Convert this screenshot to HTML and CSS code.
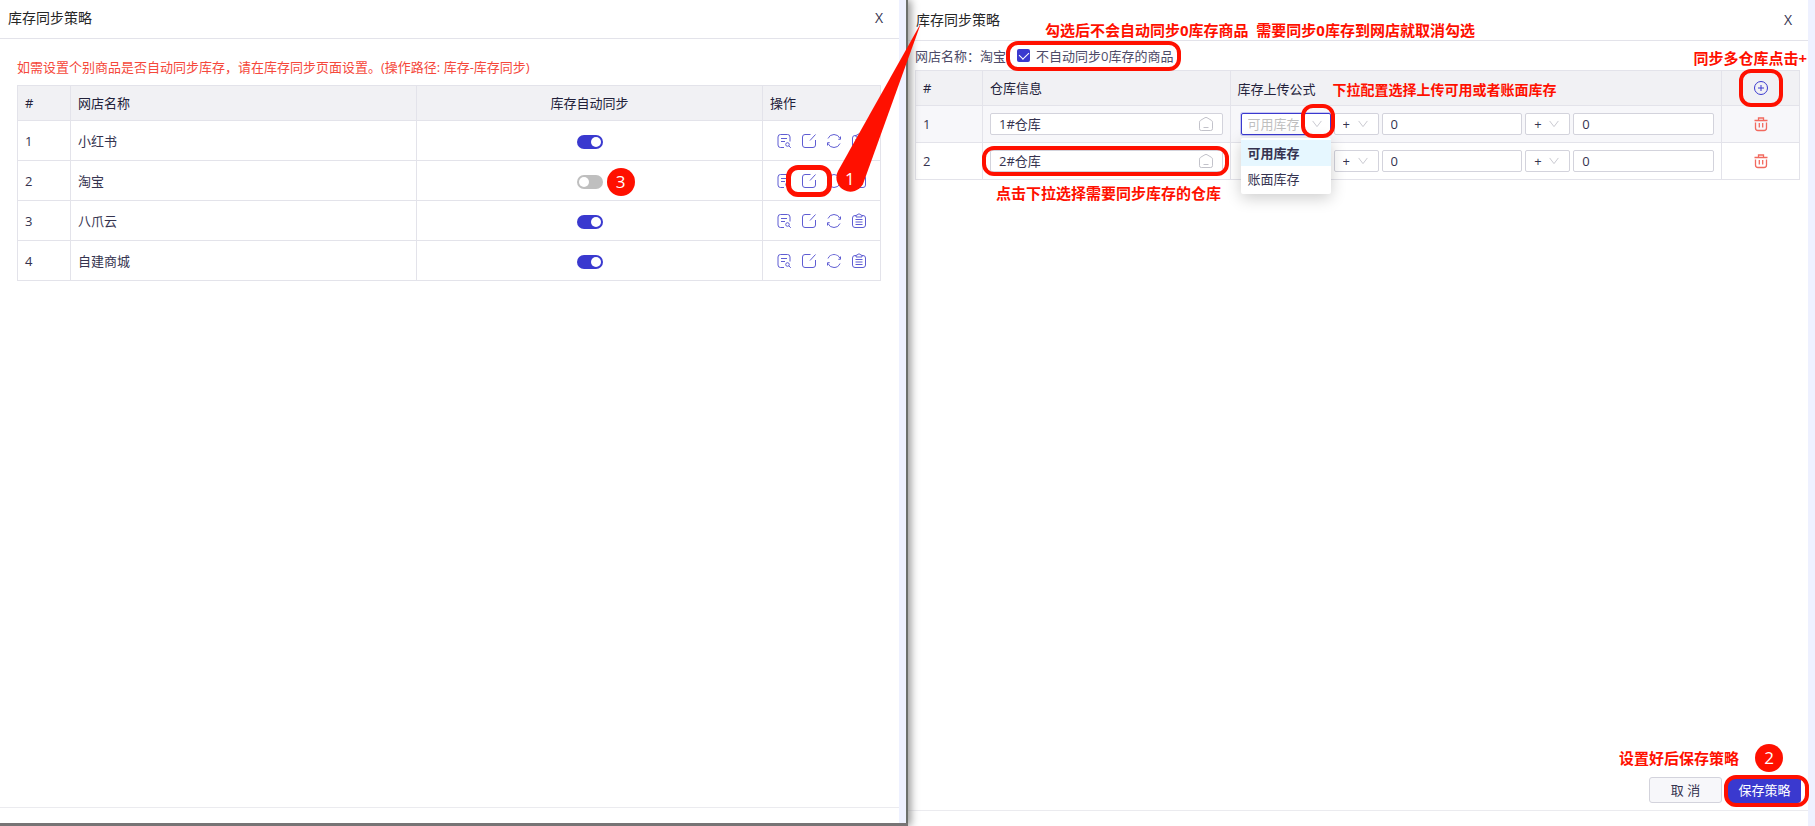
FILE: index.html
```html
<!DOCTYPE html>
<html lang="zh-CN">
<head>
    <meta charset="UTF-8">
    <meta name="viewport" content="width=device-width, initial-scale=1.0">
    <title>库存同步策略</title>
    <link rel="stylesheet" href="styles.css">
</head>
<body>
    <!-- Icon sprite -->
    <svg class="sprite" aria-hidden="true">
        <symbol id="icon-log" viewBox="0 0 16 16">
            <path d="M8 14.500H4.500A2.500 2.500 0 0 1 2 12V4A2.500 2.500 0 0 1 4.500 1.500h7A2.500 2.500 0 0 1 14 4v4.500M5 5.500h6M5 8.500h4"/>
            <circle cx="11.500" cy="11.500" r="1.800"/>
            <path d="M12.800 12.800l2 2"/>
        </symbol>
        <symbol id="icon-edit" viewBox="0 0 16 16">
            <path d="M9.500 1.500H4A2.500 2.500 0 0 0 1.500 4v8A2.500 2.500 0 0 0 4 14.500h8a2.500 2.500 0 0 0 2.500-2.500V7M9 7.500l5.500-6"/>
        </symbol>
        <symbol id="icon-sync" viewBox="0 0 16 16">
            <path d="M2 5.500A6.500 6.500 0 0 1 14 5.500M14 10.500A6.500 6.500 0 0 1 2 10.500M14.500 3.500V6.300h-2.200M1.500 12.500V9.700h2.200"/>
        </symbol>
        <symbol id="icon-list" viewBox="0 0 16 16">
            <path d="M5 2.500H4A2.500 2.500 0 0 0 1.500 5v7A2.500 2.500 0 0 0 4 14.500h8a2.500 2.500 0 0 0 2.500-2.500V5A2.500 2.500 0 0 0 12 2.500h-1M5 4V2.500L8 .8l3 1.700V4zM4.500 6.500h7M4.500 9h7M4.500 11.500h7"/>
        </symbol>
        <symbol id="icon-home" viewBox="0 0 16 16">
            <path d="M1.500 6.200Q1.500 5 2.600 4.300L7 1.700q1-.5 2 0l4.400 2.600Q14.500 5 14.500 6.200v6.500q0 1.800-1.800 1.800H3.300q-1.800 0-1.800-1.800zM5.500 11.500h5"/>
        </symbol>
        <symbol id="icon-down" viewBox="0 0 16 16">
            <path d="M3 4.500l5 6.500 5-6.500"/>
        </symbol>
        <symbol id="icon-plus" viewBox="0 0 16 16">
            <circle cx="8" cy="8" r="6.500"/>
            <path d="M8 5v6M5 8h6"/>
        </symbol>
        <symbol id="icon-trash" viewBox="0 0 16 16">
            <path d="M1.500 4.500h13M5.500 4V2h5v2M2.500 6.500V12q0 2.500 2.500 2.500h6q2.500 0 2.500-2.500V6.500M6.300 7v4.500M9.700 7v4.500"/>
        </symbol>
    </svg>

    <main class="layout">
        <section class="window shops">
            <header class="window-header">
                <h1>库存同步策略</h1>
                <button type="button" class="close" aria-label="关闭">X</button>
            </header>
            <div class="window-body">
                <p class="tip">如需设置个别商品是否自动同步库存，请在库存同步页面设置。(操作路径: 库存-库存同步)</p>
                <table class="grid shop-table">
                    <thead>
                        <tr>
                            <th class="col-no">#</th>
                            <th>网店名称</th>
                            <th class="col-sync">库存自动同步</th>
                            <th class="col-ops">操作</th>
                        </tr>
                    </thead>
                    <tbody>
                        <tr>
                            <td>1</td>
                            <td>小红书</td>
                            <td class="col-sync"><input type="checkbox" class="switch" aria-label="小红书自动同步" checked></td>
                            <td>
                                <div class="ops">
                                    <button type="button" aria-label="日志"><svg><use href="#icon-log"/></svg></button>
                                    <button type="button" aria-label="编辑"><svg><use href="#icon-edit"/></svg></button>
                                    <button type="button" aria-label="同步"><svg><use href="#icon-sync"/></svg></button>
                                    <button type="button" aria-label="清单"><svg><use href="#icon-list"/></svg></button>
                                </div>
                            </td>
                        </tr>
                        <tr>
                            <td>2</td>
                            <td>淘宝</td>
                            <td class="col-sync">
                                <span class="anchor">
                                    <input type="checkbox" class="switch" aria-label="淘宝自动同步">
                                    <span class="badge badge-toggle">3</span>
                                </span>
                            </td>
                            <td>
                                <div class="ops">
                                    <button type="button" aria-label="日志"><svg><use href="#icon-log"/></svg></button>
                                    <button type="button" class="anchor" aria-label="编辑">
                                        <svg><use href="#icon-edit"/></svg>
                                        <span class="ring ring-edit"></span>
                                    </button>
                                    <button type="button" aria-label="同步"><svg><use href="#icon-sync"/></svg></button>
                                    <button type="button" aria-label="清单"><svg><use href="#icon-list"/></svg></button>
                                    <span class="callout">
                                        <svg viewBox="0 0 86 170"><path d="M85 0L27 161A14 14 0 1 1 2 148z"/></svg>
                                        <b>1</b>
                                    </span>
                                </div>
                            </td>
                        </tr>
                        <tr>
                            <td>3</td>
                            <td>八爪云</td>
                            <td class="col-sync"><input type="checkbox" class="switch" aria-label="八爪云自动同步" checked></td>
                            <td>
                                <div class="ops">
                                    <button type="button" aria-label="日志"><svg><use href="#icon-log"/></svg></button>
                                    <button type="button" aria-label="编辑"><svg><use href="#icon-edit"/></svg></button>
                                    <button type="button" aria-label="同步"><svg><use href="#icon-sync"/></svg></button>
                                    <button type="button" aria-label="清单"><svg><use href="#icon-list"/></svg></button>
                                </div>
                            </td>
                        </tr>
                        <tr>
                            <td>4</td>
                            <td>自建商城</td>
                            <td class="col-sync"><input type="checkbox" class="switch" aria-label="自建商城自动同步" checked></td>
                            <td>
                                <div class="ops">
                                    <button type="button" aria-label="日志"><svg><use href="#icon-log"/></svg></button>
                                    <button type="button" aria-label="编辑"><svg><use href="#icon-edit"/></svg></button>
                                    <button type="button" aria-label="同步"><svg><use href="#icon-sync"/></svg></button>
                                    <button type="button" aria-label="清单"><svg><use href="#icon-list"/></svg></button>
                                </div>
                            </td>
                        </tr>
                    </tbody>
                </table>
            </div>
            <footer class="window-footer"></footer>
        </section>

        <section class="window strategy">
            <header class="window-header">
                <h2>库存同步策略</h2>
                <span class="note note-check">勾选后不会自动同步0库存商品&nbsp; 需要同步0库存到网店就取消勾选</span>
                <button type="button" class="close" aria-label="关闭">X</button>
            </header>
            <div class="window-body">
                <div class="shop-line">
                    <span>网店名称：淘宝</span>
                    <label class="anchor check">
                        <input type="checkbox" checked>
                        不自动同步0库存的商品
                        <span class="ring ring-check"></span>
                    </label>
                    <span class="note note-add">同步多仓库点击+</span>
                </div>
                <table class="grid rule-table">
                    <thead>
                        <tr>
                            <th class="col-no">#</th>
                            <th class="col-store">仓库信息</th>
                            <th class="col-rule">
                                <span class="anchor">库存上传公式<span class="note note-select">下拉配置选择上传可用或者账面库存</span></span>
                            </th>
                            <th class="col-act">
                                <button type="button" class="icon-button anchor" aria-label="新增仓库">
                                    <svg><use href="#icon-plus"/></svg>
                                    <span class="ring ring-plus"></span>
                                </button>
                            </th>
                        </tr>
                    </thead>
                    <tbody>
                        <tr class="active">
                            <td>1</td>
                            <td>
                                <div class="field">
                                    <input type="text" value="1#仓库" aria-label="仓库">
                                    <svg><use href="#icon-home"/></svg>
                                </div>
                            </td>
                            <td class="rule-cell">
                                <div class="rule">
                                    <div class="field type open">
                                        <select aria-label="库存类型"><option>可用库存</option><option>账面库存</option></select>
                                        <svg><use href="#icon-down"/></svg>
                                        <ul class="menu">
                                            <li class="selected">可用库存</li>
                                            <li>账面库存</li>
                                        </ul>
                                        <span class="ring ring-arrow"></span>
                                    </div>
                                    <div class="field op">
                                        <select aria-label="运算符"><option>+</option><option>-</option></select>
                                        <svg><use href="#icon-down"/></svg>
                                    </div>
                                    <div class="field number"><input type="text" value="0" aria-label="数值"></div>
                                    <div class="field op">
                                        <select aria-label="运算符"><option>+</option><option>-</option></select>
                                        <svg><use href="#icon-down"/></svg>
                                    </div>
                                    <div class="field number"><input type="text" value="0" aria-label="数值"></div>
                                </div>
                            </td>
                            <td class="col-act"><button type="button" class="icon-button delete" aria-label="删除"><svg><use href="#icon-trash"/></svg></button></td>
                        </tr>
                        <tr>
                            <td>2</td>
                            <td>
                                <div class="field">
                                    <input type="text" value="2#仓库" aria-label="仓库">
                                    <svg><use href="#icon-home"/></svg>
                                    <span class="ring ring-store"></span>
                                    <span class="note note-store">点击下拉选择需要同步库存的仓库</span>
                                </div>
                            </td>
                            <td class="rule-cell">
                                <div class="rule">
                                    <div class="field type">
                                        <select aria-label="库存类型"><option>可用库存</option><option>账面库存</option></select>
                                        <svg><use href="#icon-down"/></svg>
                                    </div>
                                    <div class="field op">
                                        <select aria-label="运算符"><option>+</option><option>-</option></select>
                                        <svg><use href="#icon-down"/></svg>
                                    </div>
                                    <div class="field number"><input type="text" value="0" aria-label="数值"></div>
                                    <div class="field op">
                                        <select aria-label="运算符"><option>+</option><option>-</option></select>
                                        <svg><use href="#icon-down"/></svg>
                                    </div>
                                    <div class="field number"><input type="text" value="0" aria-label="数值"></div>
                                </div>
                            </td>
                            <td class="col-act"><button type="button" class="icon-button delete" aria-label="删除"><svg><use href="#icon-trash"/></svg></button></td>
                        </tr>
                    </tbody>
                </table>
            </div>
            <div class="save-hint">
                <strong>设置好后保存策略</strong>
                <span class="badge">2</span>
            </div>
            <div class="actions">
                <button type="button" class="btn">取 消</button>
                <button type="button" class="btn btn-primary anchor">保存策略<span class="ring ring-save"></span></button>
            </div>
            <footer class="window-footer"></footer>
        </section>
    </main>
</body>
</html>
```
FILE: styles.css
```css
* {
    box-sizing: border-box;
}
body {
    margin: 0;
    font-family: "Open Sans", "Noto Sans CJK SC", sans-serif;
    font-size: 13px;
    line-height: 20px;
    color: #35334f;
    background: #fff;
}
button, input, select {
    margin: 0;
    padding: 0;
    border: 0;
    background: none;
    font: inherit;
    color: inherit;
}
button {
    cursor: pointer;
}
svg {
    width: 16px;
    height: 16px;
    flex: none;
    fill: none;
    stroke: currentColor;
    stroke-width: 1;
}
.sprite {
    position: absolute;
    width: 0;
    height: 0;
}
.layout {
    display: grid;
    grid-template-columns: 908fr 907fr;
    min-height: 100vh;
}

/* windows */
.window {
    display: flex;
    flex-direction: column;
    min-width: 0;
    border-right: 7px solid #eef1ff;
}
.shops {
    position: relative;
    z-index: 1;
    border-right: 0;
    border-bottom: 3px solid #777475;
    box-shadow: inset -2px 0 #6c706c, inset -9px 0 #eef1ff, 3px 0 8px #999;
}
.window-header {
    position: relative;
    display: flex;
    align-items: center;
    justify-content: space-between;
    height: 39px;
    padding: 0 16px 2px 8px;
    border-bottom: 1px solid #e3e3ea;
}
.shops .window-header {
    margin-right: 9px;
}
.strategy .window-header {
    height: 41px;
    padding-bottom: 0;
}
.window-header h1, .window-header h2 {
    margin: 0;
    font-size: 14px;
    font-weight: 400;
    color: #262626;
}
.close {
    font-size: 14px;
}
.window-body {
    flex: 1;
}
.shops .window-body {
    padding: 18px 27px 0 17px;
}
.strategy .window-body {
    padding: 4px 8px 0 7px;
}
.window-footer {
    height: 16px;
    border-top: 1px solid #ebebef;
}
.shops .window-footer {
    margin-right: 9px;
}
.tip {
    margin: 0 0 8px;
    color: #f5483b;
}

/* tables */
.grid {
    width: 100%;
    border-collapse: collapse;
    table-layout: fixed;
}
.grid th, .grid td {
    height: 40px;
    padding: 0 7px;
    border: 1px solid #e3e3ea;
    text-align: left;
    font-weight: 400;
}
.grid th {
    height: 35px;
    background: #f1f1f4;
    color: #22213a;
}
.shop-table .col-no {
    width: 53px;
}
.grid .col-sync {
    text-align: center;
}
.shop-table .col-ops {
    width: 118px;
}
.ops {
    position: relative;
    display: flex;
    gap: 9px;
    padding-left: 6px;
}
.ops button, .icon-button {
    display: flex;
    width: 16px;
    height: 16px;
    color: #5f5dd3;
}
.anchor {
    position: relative;
}
span.anchor {
    display: inline-flex;
    vertical-align: middle;
}
.switch {
    appearance: none;
    display: inline-block;
    width: 26px;
    height: 14px;
    padding: 2px;
    border-radius: 7px;
    background: #bfbfbf;
    vertical-align: middle;
    cursor: pointer;
}
.switch::before {
    content: "";
    display: block;
    width: 10px;
    height: 10px;
    border-radius: 50%;
    background: #fff;
}
.switch:checked {
    background: #3a39cf;
}
.switch:checked::before {
    margin-left: auto;
}

.shop-line {
    position: relative;
    display: flex;
    align-items: center;
    gap: 11px;
    height: 25px;
    padding-bottom: 4px;
    color: #4d4b68;
}
.check {
    display: flex;
    align-items: center;
    gap: 6px;
}
.check input {
    appearance: none;
    width: 13px;
    height: 13px;
    border-radius: 2px;
    background: #3a39cf;
}
.check input::before {
    content: "";
    display: block;
    width: 5px;
    height: 8px;
    margin: 1px 4px;
    border: solid #fff;
    border-width: 0 1px 1px 0;
    transform: rotate(45deg);
}
.rule-table td {
    height: 37px;
}
.rule-table .active {
    background: #f7f7fa;
}
.rule-table .col-no {
    width: 67px;
}
.rule-table .col-store {
    width: 28%;
}
.rule-table .col-act {
    width: 78px;
}
.icon-button {
    margin: 0 auto;
    color: #3a39cf;
}
.icon-button.delete {
    color: #f2695e;
}
.delete svg {
    stroke-width: 1.3;
}

/* fields */
.field {
    position: relative;
    display: flex;
    align-items: center;
    height: 22px;
    padding: 0 8px;
    border: 1px solid #d3d3dc;
    border-radius: 2px;
    background: #fff;
}
.field input, .field select {
    appearance: none;
    flex: 1;
    width: 100%;
    min-width: 0;
    height: 20px;
    outline: 0;
}
.field svg {
    color: #c2c2ca;
}
.field .ring {
    z-index: 3;
}
.grid .rule-cell {
    padding-left: 10px;
}
.rule {
    display: flex;
    gap: 3px;
}
.type {
    width: 90px;
    padding: 0 6px;
}
.type svg, .op svg {
    width: 14px;
    height: 14px;
    pointer-events: none;
}
.type.open {
    border-color: #3a39cf;
    box-shadow: 0 0 0 1px #c9c9f2;
    color: #bfbfbf;
}
.op {
    width: 45px;
}
.number {
    flex: 1;
}
.menu {
    position: absolute;
    z-index: 2;
    top: 24px;
    left: -1px;
    width: 90px;
    margin: 0;
    padding: 2px 0;
    list-style: none;
    background: #fff;
    border-radius: 2px;
    box-shadow: 0 4px 16px rgba(0, 0, 0, 0.2);
    color: #35334f;
}
.menu li {
    padding: 3px 7px;
}
.menu .selected {
    background: #e6f7ff;
    font-weight: 600;
}

/* bottom bar */
.save-hint {
    display: flex;
    align-items: center;
    justify-content: flex-end;
    gap: 16px;
    padding: 0 25px 5px 0;
    font-size: 15px;
    color: #ff1000;
}
.actions {
    display: flex;
    justify-content: flex-end;
    gap: 6px;
    padding: 0 7px 7px 0;
}
.btn {
    width: 73px;
    height: 26px;
    border: 1px solid #d3d3dc;
    border-radius: 3px;
    background: #f7f7fa;
}
.btn-primary {
    border-color: #3a39cf;
    background: #3a39cf;
    color: #fff;
}

/* guide marks */
.badge {
    display: inline-block;
    width: 28px;
    height: 28px;
    border-radius: 50%;
    background: #ff1000;
    color: #fff;
    font-size: 17px;
    line-height: 28px;
    text-align: center;
}
.badge-toggle {
    position: absolute;
    top: -7px;
    left: 30px;
}
.ring {
    position: absolute;
    border: 4px solid #ff1000;
    border-radius: 12px;
    pointer-events: none;
}
.ring-edit {
    inset: -8px -15px;
    border-width: 5px;
}
.ring-check {
    inset: -5px -8px -5px -11px;
}
.ring-plus {
    inset: -11px -14px;
}
.ring-arrow {
    inset: -10px -5px -4px 59px;
}
.ring-store {
    inset: -5px -7px -5px -9px;
}
.ring-save {
    inset: -3px -9px -5px -5px;
}
.note {
    position: absolute;
    color: #ff1000;
    font-size: 15px;
    font-weight: 700;
    white-space: nowrap;
}
.note-check {
    top: 20px;
    left: 137px;
}
.note-add {
    top: 3px;
    right: -7px;
}
.note-select {
    top: 1px;
    left: 95px;
    font-size: 14px;
}
.note-store {
    top: 32px;
    left: 5px;
}
.callout {
    position: absolute;
    z-index: 1;
    left: 66px;
    bottom: -4px;
    width: 86px;
    height: 170px;
}
.callout svg {
    width: 86px;
    height: 170px;
    fill: #ff1000;
    stroke: none;
}
.callout b {
    position: absolute;
    left: 9px;
    bottom: 4px;
    color: #fff;
    font-size: 17px;
    font-weight: 400;
}
```
